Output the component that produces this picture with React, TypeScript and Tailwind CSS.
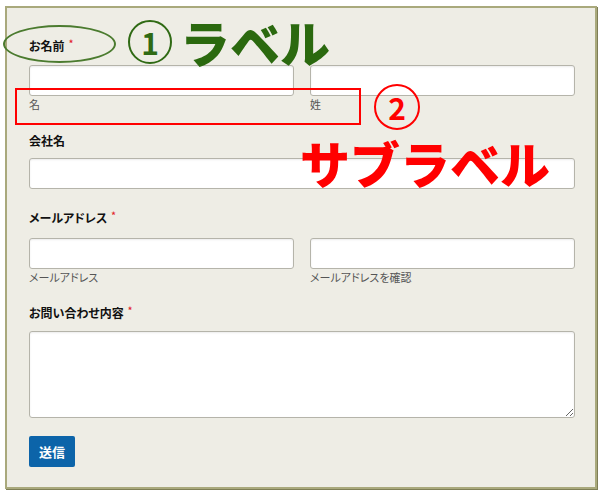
import type { ReactNode } from 'react'

const jp = "font-['Noto_Sans_CJK_JP','Noto_Sans',sans-serif]"

function Label({ children, required, mb }: { children: ReactNode; required?: boolean; mb: string }) {
  return (
    <div className={`h-[18px] text-[12px] leading-[18px] font-bold text-[#111] [font-feature-settings:'palt'] ${mb}`}>
      {children}
      {required && <span className="ml-[4px] align-top text-[9px] leading-[14px] text-[#e2262b]">*</span>}
    </div>
  )
}

function Input({ sub }: { sub?: string }) {
  return (
    <div className="flex flex-col">
      <input
        className="h-[31px] w-full rounded-[3px] border border-[#b5b4aa] bg-white shadow-[inset_0_1px_2px_rgba(0,0,0,0.08)] outline-none"
        readOnly
      />
      {sub && (
        <div className="h-[16px] text-[11px] leading-[16px] text-[#555] [font-feature-settings:'palt']">{sub}</div>
      )}
    </div>
  )
}

export default function App() {
  return (
    <div className={`relative h-[494px] w-[600px] overflow-hidden bg-white pl-[5px] pt-[6px] ${jp}`}>
      <div className="h-[483px] w-[592px] border-2 border-[#a9a97c] bg-[#eeede5] pl-[22px] pr-[20px] pt-[29px] shadow-[1px_1px_0_#7e7e56]">
        <Label required mb="mb-[10px]">お名前</Label>
        <div className="grid grid-cols-2 gap-[16px]">
          <Input sub="名" />
          <Input sub="姓" />
        </div>

        <div className="mt-[20px]">
          <Label mb="mb-[8px]">会社名</Label>
          <Input />
        </div>

        <div className="mt-[20px]">
          <Label required mb="mb-[11px]">メールアドレス</Label>
          <div className="grid grid-cols-2 gap-[16px]">
            <Input sub="メールアドレス" />
            <Input sub="メールアドレスを確認" />
          </div>
        </div>

        <div className="mt-[19px]">
          <Label required mb="mb-[9px]">お問い合わせ内容</Label>
          <textarea
            className="block h-[87px] w-full resize-y rounded-[3px] border border-[#b5b4aa] bg-white shadow-[inset_0_1px_2px_rgba(0,0,0,0.08)] outline-none"
            readOnly
          />
        </div>

        <button className="mt-[18px] flex h-[31px] w-[46px] items-center justify-center rounded-[2px] bg-[#0c64a9] text-[13px] font-bold text-white">
          送信
        </button>
      </div>

      {/* annotations */}
      <div className="absolute left-[3px] top-[25px] h-[38px] w-[113px] rounded-[50%] border-2 border-[#4b7b2f]" />
      <div className="absolute left-[128px] top-[20px] flex h-[44px] w-[44px] items-center justify-center rounded-full border-2 border-[#2f6a14] text-[30px] font-bold leading-none text-[#2f6a14]">
        1
      </div>
      <div className="absolute left-[180px] top-[11px] text-[50px] font-black leading-[60px] text-[#2b690f]">ラベル</div>

      <div className="absolute left-[15px] top-[88px] h-[37px] w-[346px] border-2 border-[#ff0000]" />
      <div className="absolute left-[374px] top-[84px] flex h-[46px] w-[46px] items-center justify-center rounded-full border-2 border-[#ff0000] text-[30px] font-bold leading-none text-[#ff0000]">
        2
      </div>
      <div className="absolute left-[300px] top-[132px] text-[50px] font-black leading-[60px] text-[#ff0000]">サブラベル</div>
    </div>
  )
}
